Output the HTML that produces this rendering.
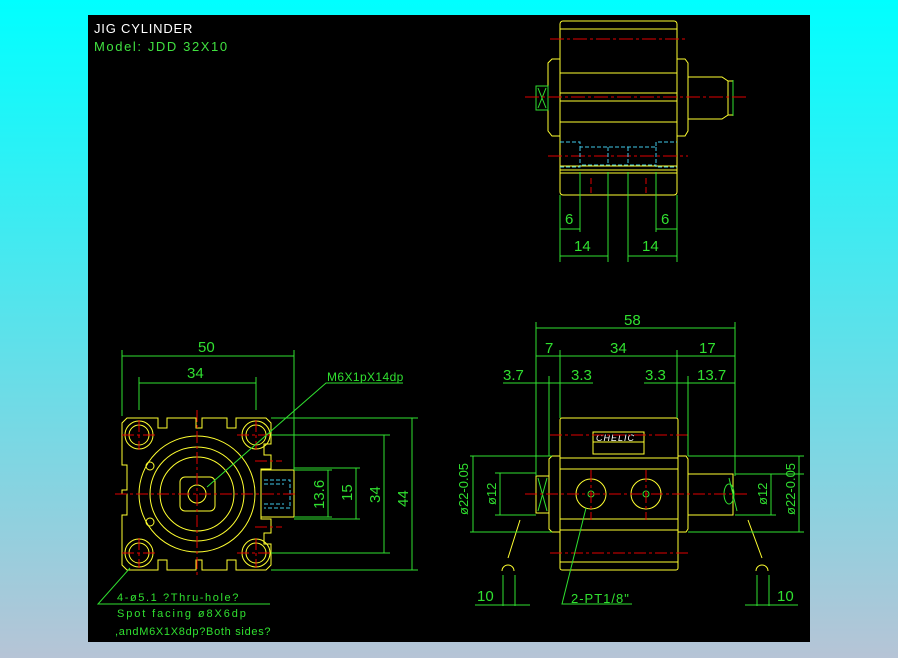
<!DOCTYPE html>
<html><head><meta charset="utf-8"><style>
html,body{margin:0;padding:0;width:898px;height:658px;overflow:hidden;background:linear-gradient(#00ffff,#b6c4d6);}
svg{position:absolute;left:0;top:0;}
text{font-family:"Liberation Sans",sans-serif;}
</style></head><body>
<svg width="898" height="658" viewBox="0 0 898 658">
<rect x="88" y="15" width="722" height="627" fill="#000"/>
<text x="94" y="33" fill="#fff" font-size="13" letter-spacing="0.8">JIG CYLINDER</text>
<text x="94" y="51" fill="#40e040" font-size="13" letter-spacing="1.6">Model:  JDD  32X10</text>

<!-- TOP VIEW -->
<g fill="none" stroke="#ffff30" stroke-width="1">
<rect x="560" y="21" width="117" height="174" rx="3"/>
<path d="M560 29H677M560 73H677M560 93H677M560 101H677M560 122H677M560 166H677M560 170H677M560 173H677"/>
<path d="M560 59H552L548 63V131L552 136H560M677 59H685L688 63V131L685 136H677"/>
<path d="M688 77H722L728 81V115L722 119H688M728 81H733V115H728"/>
</g>
<g fill="none" stroke="#30e030"><rect x="536" y="86" width="12" height="24"/><path d="M538 88L546 108M546 88L538 108M733 80V116"/></g>
<g stroke="#e00000" stroke-dasharray="14 3 3 3"><path d="M550 39H688M525 97H747M548 156H688"/><path d="M591 178V196M646 178V196" stroke-dasharray="6 3"/></g>
<g fill="none" stroke="#40c8e8" stroke-dasharray="4 2"><path d="M560 142H580V147H608V147H628V147H656V142H677M560 167H580V165H608H628H656V167H677M580 147V165M608 147V165M628 147V165M656 147V165"/></g>
<g stroke="#30e030" fill="#30e030">
<path d="M560 195V262M580 172V232M608 172V262M628 172V262M656 172V232M677 195V262" fill="none"/>
<path d="M560 229H580M656 229H677M560 256H608M628 256H677" fill="none"/>
<text x="565" y="224" font-size="15" stroke="none">6</text>
<text x="661" y="224" font-size="15" stroke="none">6</text>
<text x="574" y="251" font-size="15" stroke="none">14</text>
<text x="642" y="251" font-size="15" stroke="none">14</text>
</g>

<!-- LEFT VIEW -->
<g fill="none" stroke="#ffff30">
<path d="M127 418H158V428H167V418H196V428H202V418H227V428H236V418H266L271 423V444H264V455H271V469H261V519H271V533H264V544H271V565L266 570H236V560H227V570H202V560H196V570H167V560H158V570H127L122 565V515H127V494H122V490H127V465H122V423Z"/>
<circle cx="139" cy="435" r="14"/><circle cx="139" cy="435" r="10"/>
<circle cx="256" cy="435" r="14"/><circle cx="256" cy="435" r="10"/>
<circle cx="139" cy="553" r="14"/><circle cx="139" cy="553" r="10"/>
<circle cx="256" cy="553" r="14"/><circle cx="256" cy="553" r="10"/>
<circle cx="197" cy="494" r="58"/><circle cx="197" cy="494" r="47"/><circle cx="197" cy="494" r="37"/>
<rect x="180" y="477" width="35" height="34" rx="5"/><circle cx="197" cy="494" r="9"/>
<circle cx="150" cy="466" r="4"/><circle cx="150" cy="522" r="4"/>
<path d="M261 470H294V517H261"/>
</g>
<g fill="none" stroke="#40c8e8" stroke-dasharray="4 2"><path d="M264 480H290V508H264M264 484H284M264 504H284"/></g>
<g stroke="#e00000" stroke-dasharray="12 3 3 3"><path d="M115 494H296M197 410V578M122 435H158M237 435H274M122 553H158M237 553H274M139 420V450M256 420V450M139 538V568M256 538V568M255 461H282M255 527H282"/></g>
<g stroke="#30e030" fill="none">
<path d="M122 416V350M294 470V350M139 410V377M256 410V377M122 356H294M139 383H256"/>
<path d="M271 418H418M271 435H390M294 470H332M294 517H332M294 468H360M294 519H360M271 553H390M271 570H418"/>
<path d="M328 470V517M356 468V519M384 435V553M412 418V570"/>
<path d="M207 487L326 383H403M130 568L98 604H270"/>
</g>
<g fill="#30e030" font-size="15">
<text x="198" y="352">50</text><text x="187" y="378">34</text>
<text x="327" y="381" font-size="12" letter-spacing="0.4">M6X1pX14dp</text>
<g transform="translate(324 509) rotate(-90)"><text>13.6</text></g>
<g transform="translate(352 501) rotate(-90)"><text>15</text></g>
<g transform="translate(380 503) rotate(-90)"><text>34</text></g>
<g transform="translate(408 507) rotate(-90)"><text>44</text></g>
<text x="117" y="601" font-size="11" letter-spacing="1.6">4-ø5.1 ?Thru-hole?</text>
<text x="117" y="617" font-size="11" letter-spacing="1.9">Spot facing ø8X6dp</text>
<text x="115" y="635" font-size="11" letter-spacing="0.7">,andM6X1X8dp?Both sides?</text>
</g>

<!-- FRONT VIEW -->
<g fill="none" stroke="#ffff30">
<rect x="560" y="418" width="118" height="152" rx="2"/>
<path d="M560 458H678M560 469H678M560 519H678M560 530H678M560 562H678"/>
<path d="M560 456H552L549 459V529L552 532H560M678 456H686L688 459V529L686 532H678"/>
<rect x="593" y="432" width="51" height="22"/><path d="M593 442H644"/>
<circle cx="591" cy="494" r="15"/><circle cx="646" cy="494" r="15"/>
<path d="M536 476H549V513H536Z M688 474H733V515H688"/>
<path d="M508 558L520 520M762 558L748 520"/>
<path d="M502 571a6 6 0 1 1 12 0M756 571a6 6 0 1 1 12 0"/>
</g>
<text x="596" y="441" fill="#fff" font-size="9" font-style="italic" letter-spacing="1">CHELIC</text>
<g stroke="#30e030" fill="none"><circle cx="591" cy="494" r="3"/><circle cx="646" cy="494" r="3"/><path d="M538 478L547 511M547 478L538 511M729 478L737 511"/><ellipse cx="729" cy="494" rx="5" ry="10"/></g>
<g stroke="#e00000" stroke-dasharray="12 3 3 3"><path d="M550 435H688M525 494H747M550 553H688M591 470V520M646 470V520"/></g>
<g stroke="#30e030" fill="none">
<path d="M536 322V476M735 322V476M560 350V418M677 350V418M549 376V456M688 376V456"/>
<path d="M536 328H735M536 356H735M503 383H593M644 383H735"/>
<path d="M470 456H552M470 532H552M495 473H536M495 515H536M735 474H804M735 515H776M688 456H804M688 532H804"/>
<path d="M473 456V532M500 473V515M771 474V515M799 456V532"/>
<path d="M503 575V606M515 575V606M757 575V606M769 575V606M475 605H530M745 605H798"/>
<path d="M586 508L562 604H632"/>
</g>
<g fill="#30e030" font-size="15">
<text x="624" y="325">58</text><text x="545" y="353">7</text><text x="610" y="353">34</text><text x="699" y="353">17</text>
<text x="503" y="380">3.7</text><text x="571" y="380">3.3</text><text x="645" y="380">3.3</text><text x="697" y="380">13.7</text>
<text x="477" y="601">10</text><text x="777" y="601">10</text>
<text x="571" y="603" font-size="13" letter-spacing="1">2-PT1/8"</text>
<g transform="translate(468 515) rotate(-90)"><text font-size="13">ø22-0.05</text></g>
<g transform="translate(496 505) rotate(-90)"><text font-size="13">ø12</text></g>
<g transform="translate(767 505) rotate(-90)"><text font-size="13">ø12</text></g>
<g transform="translate(795 515) rotate(-90)"><text font-size="13">ø22-0.05</text></g>
</g>
</svg>
</body></html>
